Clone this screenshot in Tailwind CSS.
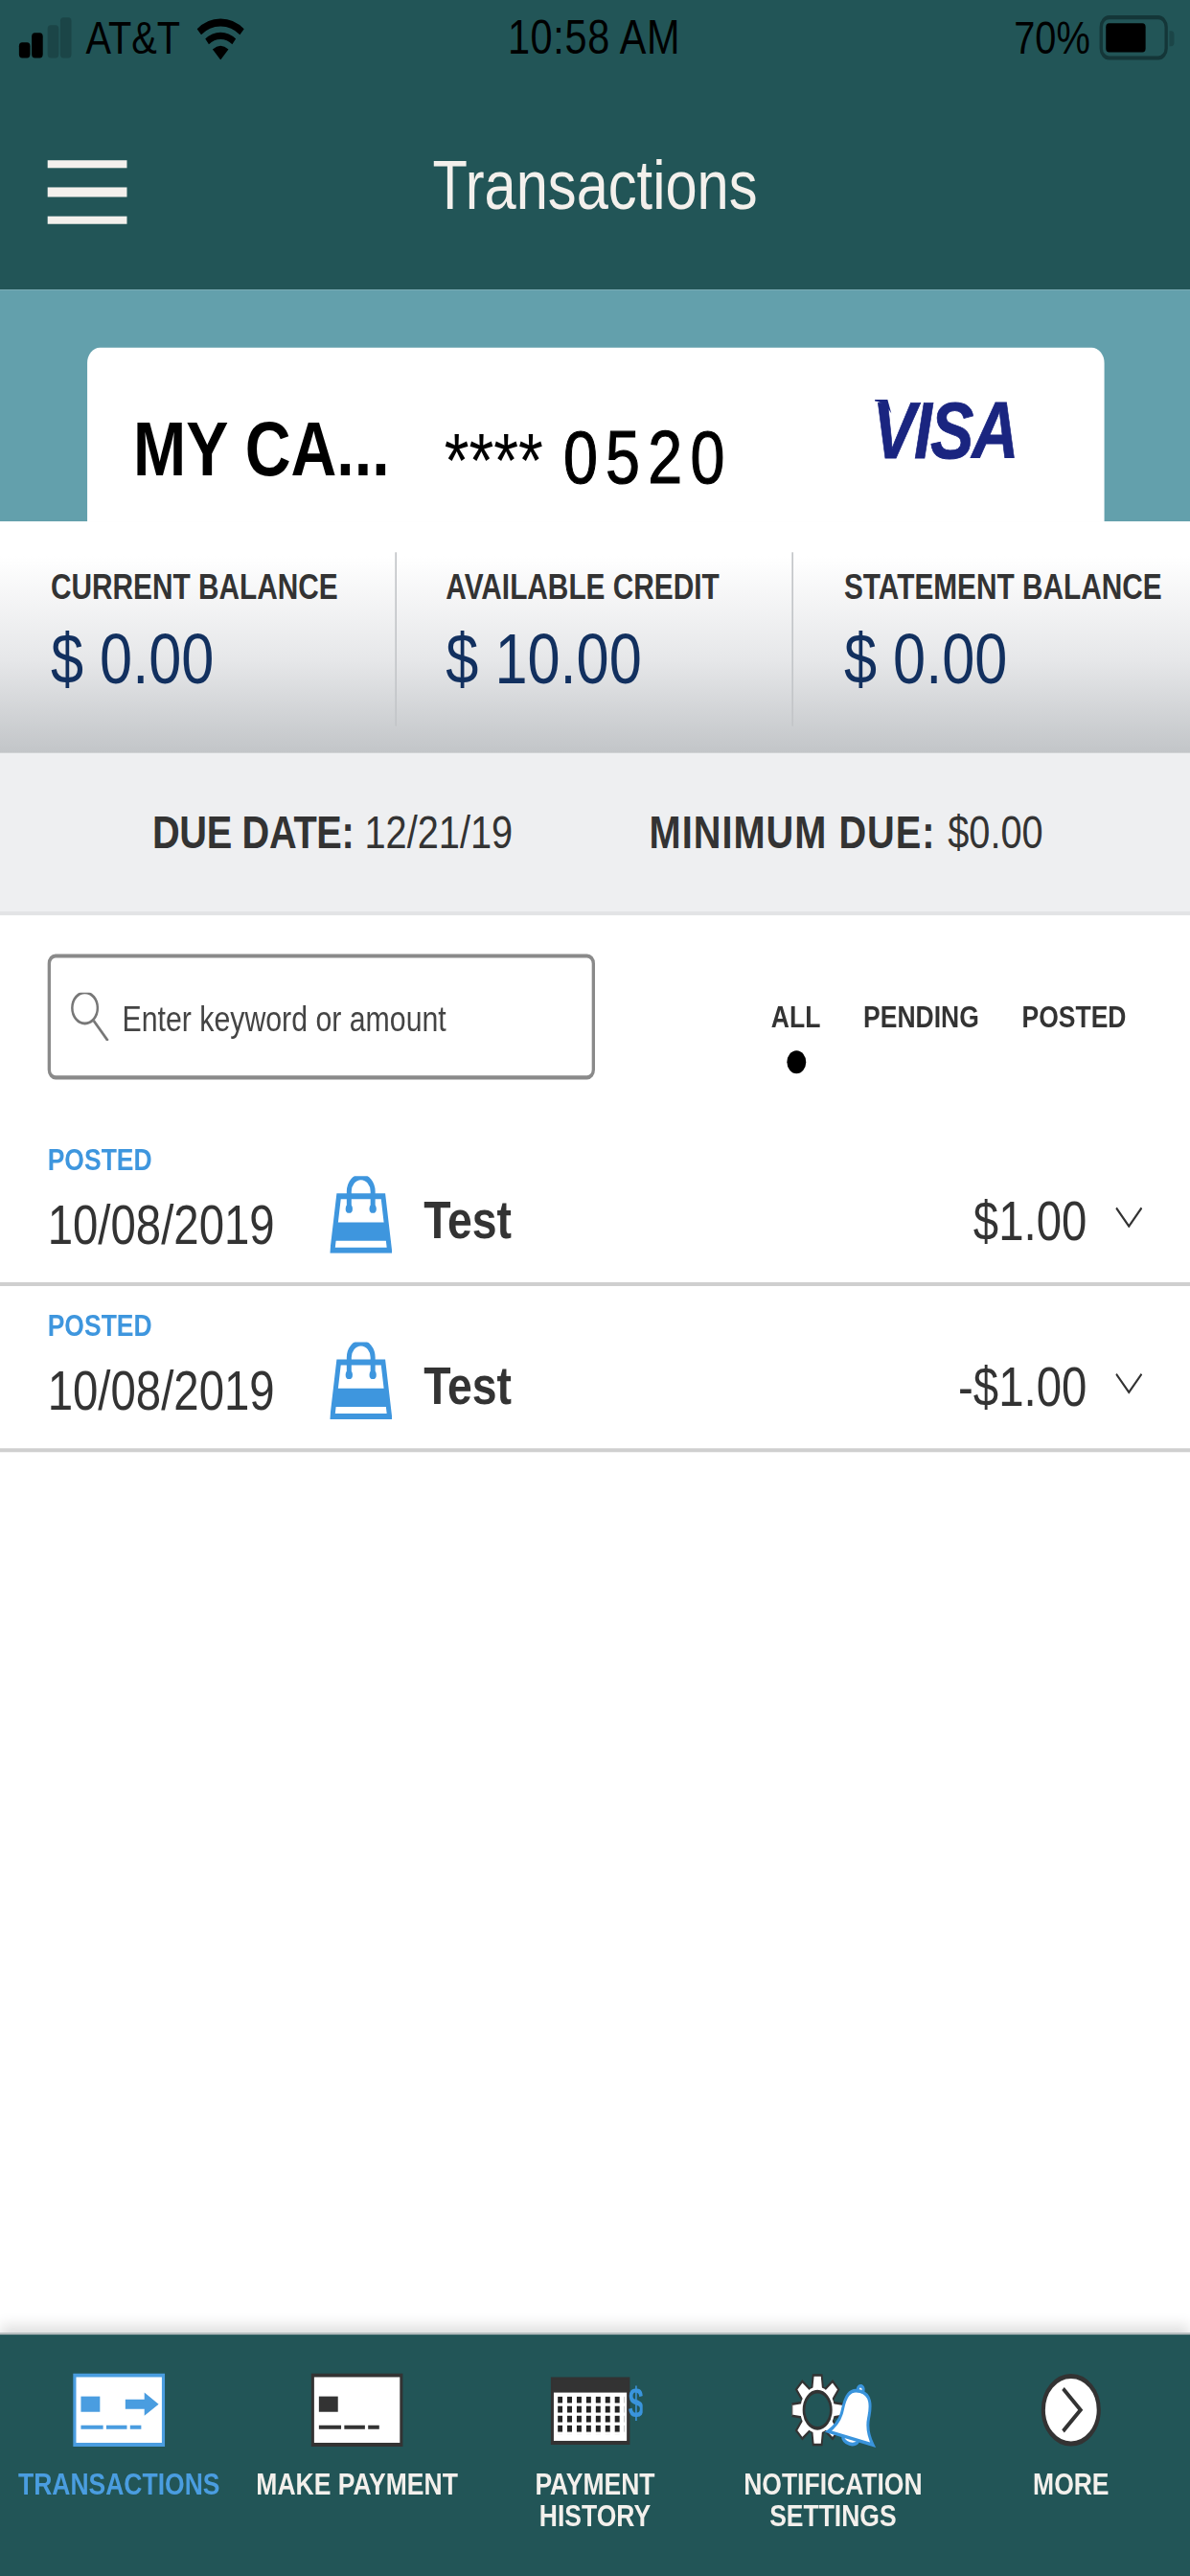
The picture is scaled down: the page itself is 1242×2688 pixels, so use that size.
<!DOCTYPE html>
<html lang="en">
<head>
    <meta charset="UTF-8">
    <meta name="viewport" content="width=device-width, initial-scale=1.0">
    <title>Transactions</title>
    <script src="https://cdn.jsdelivr.net/npm/@tailwindcss/browser@4"></script>
</head>
<body class="w-[1242px] h-[2688px] overflow-hidden bg-white">

<!-- The screenshot is a 750x1334 phone capture stretched to 1242x2688, so the page is built at 750x1334 and scaled -->
<div class="w-[750px] h-[1334px] origin-top-left scale-x-[1.656] scale-y-[2.015] flex flex-col font-['Liberation_Sans',sans-serif] text-[#333]">

    <!-- Status bar + header -->
    <header class="h-[150px] bg-[#225557] shrink-0">
        <div class="h-[40px] flex items-center relative text-[24px] text-black">
            <div class="flex items-end gap-[1px] ml-[12px] h-[21px] -mt-[2px]">
                <span class="w-[7px] h-[8px] bg-black rounded-[2px]"></span>
                <span class="w-[7px] h-[13px] bg-black rounded-[2px]"></span>
                <span class="w-[7px] h-[17px] bg-[#1b4547] rounded-[2px] ml-[2px]"></span>
                <span class="w-[7px] h-[21px] bg-[#1b4547] rounded-[2px]"></span>
            </div>
            <span class="ml-[9px]">AT&amp;T</span>
            <svg class="ml-[10px] -mt-[1px]" width="30" height="22" viewBox="0 0 30 22">
                <path d="M1.500 7.500C9 1 21 1 28.500 7.500" fill="none" stroke="#000" stroke-width="4"/>
                <path d="M6.500 12.500C11.500 8.500 18.500 8.500 23.500 12.500" fill="none" stroke="#000" stroke-width="3.600"/>
                <path d="M10 16.500Q15 13 20 16.500L15 22Z" fill="#000"/>
            </svg>
            <span class="absolute left-[320px] text-[25px] tracking-[.4px]">10:58 AM</span>
            <span class="absolute left-[639px]">70%</span>
            <div class="absolute left-[693px] top-[8px] w-[43px] h-[23px] border-2 border-[#143638] rounded-[6px] p-[2px]">
                <div class="w-[25px] h-full bg-black rounded-[2px]"></div>
            </div>
            <span class="absolute left-[737px] top-[16px] w-[3px] h-[8px] bg-[#1b4547] rounded-r-[2px]"></span>
        </div>
        <div class="flex px-[30px] pt-[43px]">
            <div class="w-[50px] flex flex-col gap-[10px]">
                <span class="h-[4px] bg-[#f3f0ec]"></span>
                <span class="h-[5px] bg-[#f3f0ec]"></span>
                <span class="h-[4px] bg-[#f3f0ec]"></span>
            </div>
            <h1 class="flex-1 pr-[50px] text-center text-[36px] leading-[36px] -mt-[5px] text-[#f3f0ec]">Transactions</h1>
        </div>
    </header>

    <!-- Card strip -->
    <section class="h-[120px] bg-[#63a0ac] pt-[30px] px-[55px] shrink-0">
        <div class="w-[641px] h-[90px] bg-white rounded-t-lg flex items-start text-black">
            <span class="w-[196px] ml-[29px] mt-[32px] text-[40px] leading-[40px] font-bold whitespace-nowrap">MY CA...</span>
            <span class="w-[75px] mt-[38px] text-[40px] leading-[40px]">****</span>
            <span class="w-[195px] mt-[37px] text-[39px] leading-[40px] tracking-[5px] [-webkit-text-stroke:0.6px_#000]">0520</span>
            <span class="relative mt-[23px] text-[41px] leading-[41px] font-bold italic tracking-[-1.200px] text-[#1a2580] [-webkit-text-stroke:0.4px_#1a2580]">
                VISA
                <svg class="absolute left-[1px] top-[4px]" width="12" height="8" viewBox="0 0 14 10">
                    <path d="M0 0H10L13 9C10 4 6 1.500 0 .8Z" fill="#1a2580"/>
                </svg>
            </span>
        </div>
    </section>

    <!-- Balances -->
    <section class="h-[120px] pt-[16px] flex bg-gradient-to-b from-white from-[15%] via-[#e6e7e9] via-[60%] to-[#c2c5c8] shrink-0">
        <div class="w-[250px] h-[90px] pl-[32px] pt-[9px] border-r border-[#c3c5c8]">
            <p class="text-[18px] leading-[18px] font-bold whitespace-nowrap">CURRENT BALANCE</p>
            <p class="mt-[10px] text-[37px] leading-[37px] text-[#12305f]">$ 0.00</p>
        </div>
        <div class="w-[250px] h-[90px] pl-[31px] pt-[9px] border-r border-[#c3c5c8]">
            <p class="text-[18px] leading-[18px] font-bold whitespace-nowrap">AVAILABLE CREDIT</p>
            <p class="mt-[10px] text-[37px] leading-[37px] text-[#12305f]">$ 10.00</p>
        </div>
        <div class="w-[250px] h-[90px] pl-[32px] pt-[9px]">
            <p class="text-[18px] leading-[18px] font-bold whitespace-nowrap">STATEMENT BALANCE</p>
            <p class="mt-[10px] text-[37px] leading-[37px] text-[#12305f]">$ 0.00</p>
        </div>
    </section>

    <!-- Due date -->
    <section class="h-[84px] bg-[#eeeff1] border-b-2 border-[#e2e3e5] flex items-center pl-[96px] gap-[86px] text-[24px] shrink-0">
        <p><b class="tracking-[-.2px]">DUE DATE:</b> <span>12/21/19</span></p>
        <p><b class="tracking-[.6px]">MINIMUM DUE:</b> <span class="ml-[1px]">$0.00</span></p>
    </section>

    <!-- Search and filter -->
    <section class="h-[106px] flex items-start pl-[30px] pt-[20px] shrink-0">
        <div class="w-[345px] h-[65px] border-2 border-[#8a8a8a] rounded-[5px] flex items-center pl-[12px] gap-[8px]">
            <svg width="25" height="25" viewBox="0 0 25 25">
                <circle cx="9.500" cy="8" r="8" fill="none" stroke="#777" stroke-width="1.500"/>
                <path d="M15 14.500L24 25" stroke="#777" stroke-width="1.500"/>
            </svg>
            <span class="text-[18.300px] text-[#444] whitespace-nowrap mt-[2px]">Enter keyword or amount</span>
        </div>
        <div class="flex ml-[111px] pt-[25px] gap-[27px] text-[16px] leading-[16px] font-bold">
            <div class="flex flex-col items-center">
                <span>ALL</span>
                <span class="mt-[9px] w-[12px] h-[12px] rounded-full bg-black"></span>
            </div>
            <span>PENDING</span>
            <span>POSTED</span>
        </div>
    </section>

    <!-- Transaction rows -->
    <div class="h-[86px] border-b-2 border-[#cfcfcf] flex items-start shrink-0">
        <div class="w-[208px] pl-[30px] pt-[13px]">
            <p class="text-[16px] leading-[16px] font-bold text-[#3e96de]">POSTED</p>
            <p class="mt-[11px] text-[28.600px] leading-[29px]">10/08/2019</p>
        </div>
        <svg class="mt-[29px]" width="39" height="40" viewBox="0 0 39 40">
            <path d="M5.500 10.500H33.500L37.500 38.500H1.500Z" fill="#fff" stroke="#3e96de" stroke-width="3"/>
            <path d="M3.600 24H35.400L36.800 33.500H2.200Z" fill="#3e96de"/>
            <path d="M12 17V8a7.500 7.500 0 0 1 15 0v9" fill="none" stroke="#3e96de" stroke-width="3"/>
            <circle cx="12" cy="17" r="2.200" fill="#3e96de"/>
            <circle cx="27" cy="17" r="2.200" fill="#3e96de"/>
        </svg>
        <span class="ml-[20px] mt-[38px] text-[28px] leading-[28px] font-bold">Test</span>
        <span class="ml-auto mt-[38px] text-[28.600px] leading-[29px]">$1.00</span>
        <svg class="ml-[18px] mr-[30px] mt-[45px]" width="17" height="11" viewBox="0 0 17 11">
            <path d="M.5.500L8.500 10L16.500.500" fill="none" stroke="#333" stroke-width="1.200"/>
        </svg>
    </div>
    <div class="h-[86px] border-b-2 border-[#cfcfcf] flex items-start shrink-0">
        <div class="w-[208px] pl-[30px] pt-[13px]">
            <p class="text-[16px] leading-[16px] font-bold text-[#3e96de]">POSTED</p>
            <p class="mt-[11px] text-[28.600px] leading-[29px]">10/08/2019</p>
        </div>
        <svg class="mt-[29px]" width="39" height="40" viewBox="0 0 39 40">
            <path d="M5.500 10.500H33.500L37.500 38.500H1.500Z" fill="#fff" stroke="#3e96de" stroke-width="3"/>
            <path d="M3.600 24H35.400L36.800 33.500H2.200Z" fill="#3e96de"/>
            <path d="M12 17V8a7.500 7.500 0 0 1 15 0v9" fill="none" stroke="#3e96de" stroke-width="3"/>
            <circle cx="12" cy="17" r="2.200" fill="#3e96de"/>
            <circle cx="27" cy="17" r="2.200" fill="#3e96de"/>
        </svg>
        <span class="ml-[20px] mt-[38px] text-[28px] leading-[28px] font-bold">Test</span>
        <span class="ml-auto mt-[38px] text-[28.600px] leading-[29px]">-$1.00</span>
        <svg class="ml-[18px] mr-[30px] mt-[45px]" width="17" height="11" viewBox="0 0 17 11">
            <path d="M.5.500L8.500 10L16.500.500" fill="none" stroke="#333" stroke-width="1.200"/>
        </svg>
    </div>

    <div class="flex-1"></div>

    <!-- Bottom nav -->
    <nav class="h-[126px] bg-[#225557] border-t border-[#bfc3c4] shadow-[0_-4px_7px_rgba(0,0,0,0.12)] grid grid-cols-5 text-center text-[16px] leading-[16px] font-bold text-[#f3f0ec] shrink-0">
        <div class="flex flex-col items-center pt-[20px]">
            <svg width="58" height="38" viewBox="0 0 58 38">
                <rect x="1" y="1" width="56" height="36" fill="#fff" stroke="#4a9de0" stroke-width="2"/>
                <rect x="5" y="12" width="12" height="8" fill="#4a9de0"/>
                <path d="M33 13.500H45V10L54 16L45 22V18.500H33Z" fill="#4a9de0"/>
                <path d="M5 28H19M21 28H34M36 28H43" stroke="#4a9de0" stroke-width="2"/>
            </svg>
            <span class="mt-[12px] text-[#4a9de0]">TRANSACTIONS</span>
        </div>
        <div class="flex flex-col items-center pt-[20px]">
            <svg width="58" height="38" viewBox="0 0 58 38">
                <rect x="1" y="1" width="56" height="36" fill="#fff" stroke="#333" stroke-width="2"/>
                <rect x="5" y="12" width="12" height="8" fill="#333"/>
                <path d="M5 28H19M21 28H34M36 28H43" stroke="#333" stroke-width="2"/>
            </svg>
            <span class="mt-[12px] whitespace-nowrap">MAKE PAYMENT</span>
        </div>
        <div class="flex flex-col items-center pt-[20px]">
            <svg class="ml-[2px]" width="58" height="38" viewBox="0 0 58 38">
                <defs>
                    <pattern id="days" x="4.500" y="12" width="6" height="5" patternUnits="userSpaceOnUse">
                        <rect width="3" height="3.400" fill="#222"/>
                    </pattern>
                </defs>
                <rect x="1" y="3" width="48" height="33" fill="#fff" stroke="#333" stroke-width="2"/>
                <rect x="1" y="3" width="48" height="7" fill="#333"/>
                <rect x="4.500" y="12" width="42" height="20" fill="url(#days)"/>
                <text transform="translate(49 23) scale(.8 1)" font-size="22" fill="#3a94dc">$</text>
            </svg>
            <span class="mt-[12px]">PAYMENT<br>HISTORY</span>
        </div>
        <div class="flex flex-col items-center pt-[20px]">
            <svg class="ml-[1px]" width="54" height="40" viewBox="0 0 54 40">
                <g transform="scale(.9 1)">
                    <g fill="#fff" stroke="#333" stroke-width="1.300">
                        <circle cx="18" cy="19" r="12"/>
                        <path d="M15 1H21L22 9H14Z"/>
                        <path d="M15 1H21L22 9H14Z" transform="rotate(45 18 19)"/>
                        <path d="M15 1H21L22 9H14Z" transform="rotate(90 18 19)"/>
                        <path d="M15 1H21L22 9H14Z" transform="rotate(135 18 19)"/>
                        <path d="M15 1H21L22 9H14Z" transform="rotate(180 18 19)"/>
                        <path d="M15 1H21L22 9H14Z" transform="rotate(225 18 19)"/>
                        <path d="M15 1H21L22 9H14Z" transform="rotate(270 18 19)"/>
                        <path d="M15 1H21L22 9H14Z" transform="rotate(315 18 19)"/>
                    </g>
                    <circle cx="18" cy="19" r="12" fill="#fff"/>
                    <circle cx="18" cy="19" r="9.500" fill="#225557" stroke="#333" stroke-width="1.800"/>
                </g>
                <g transform="translate(2 0) rotate(14 38 22)" fill="#fff" stroke="#3a94dc" stroke-width="1.800">
                    <circle cx="38" cy="8" r="1.800"/>
                    <path d="M33 34a5 3 0 0 0 10 0"/>
                    <path d="M38 9C31 9 29.500 14 29.500 21C29.500 27 26.500 31 23.500 34H52.500C49.500 31 46.500 27 46.500 21C46.500 14 45 9 38 9Z"/>
                </g>
            </svg>
            <span class="mt-[10px]">NOTIFICATION<br>SETTINGS</span>
        </div>
        <div class="flex flex-col items-center pt-[20px]">
            <svg width="38" height="38" viewBox="0 0 38 38">
                <circle cx="19" cy="19" r="17.500" fill="#fff" stroke="#333" stroke-width="2.500"/>
                <path d="M14 8L25 19L14 30" fill="none" stroke="#333" stroke-width="2.200"/>
            </svg>
            <span class="mt-[12px]">MORE</span>
        </div>
    </nav>
</div>

</body>
</html>
